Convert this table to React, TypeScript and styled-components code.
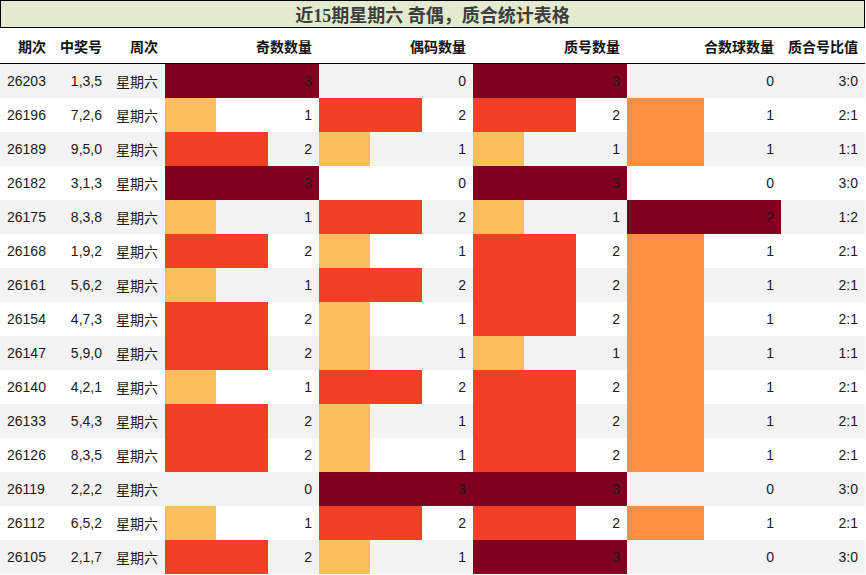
import React from "react";
import styled, { createGlobalStyle } from "styled-components";

const Global = createGlobalStyle`
  html, body { margin: 0; padding: 0; background: #fff; }
  body { font-family: "Liberation Sans", Arial, "Noto Sans CJK SC", sans-serif; }
`;

const Page = styled.div`
  width: 865px;
`;

const Title = styled.div`
  box-sizing: border-box;
  height: 28px;
  border: 1px solid #000;
  background: #e2ebcf;
  display: flex;
  align-items: center;
  justify-content: center;
  font-family: "Liberation Serif", "Noto Sans CJK SC", serif;
  font-weight: bold;
  font-size: 18px;
  color: #3d3d3d;
`;

const COLS = "53px 56px 56px 154px 154px 154px 154px 84px";

const HeaderRow = styled.div`
  display: grid;
  grid-template-columns: ${COLS};
  height: 35px;
  border-bottom: 1px solid #000;
`;

const HeadCell = styled.div`
  display: flex;
  align-items: center;
  justify-content: flex-end;
  padding-right: 7px;
  font-weight: bold;
  font-size: 14px;
  color: #111;
  font-family: "Liberation Sans", "Noto Sans CJK SC", sans-serif;
`;

const Row = styled.div<{ $alt: boolean }>`
  display: grid;
  grid-template-columns: ${COLS};
  height: 34px;
  background: ${(p) => (p.$alt ? "#f3f3f3" : "#ffffff")};
`;

const Cell = styled.div`
  position: relative;
  display: flex;
  align-items: center;
  justify-content: flex-end;
  padding-right: 7px;
  font-size: 14px;
  color: #1a1a1a;
  font-family: "Liberation Sans", "Noto Sans CJK SC", sans-serif;
`;

const FirstCell = styled(Cell)`
  justify-content: flex-start;
  padding-left: 7px;
  padding-right: 0;
`;

const Bar = styled.div<{ $color: string }>`
  position: absolute;
  left: 0;
  top: 0;
  bottom: 0;
  background: ${(p) => p.$color};
`;

const Value = styled.span`
  position: relative;
`;

type R = [string, string, number, number, number, number, string];

const rows: R[] = [
  ["26203", "1,3,5", 3, 0, 3, 0, "3:0"],
  ["26196", "7,2,6", 1, 2, 2, 1, "2:1"],
  ["26189", "9,5,0", 2, 1, 1, 1, "1:1"],
  ["26182", "3,1,3", 3, 0, 3, 0, "3:0"],
  ["26175", "8,3,8", 1, 2, 1, 2, "1:2"],
  ["26168", "1,9,2", 2, 1, 2, 1, "2:1"],
  ["26161", "5,6,2", 1, 2, 2, 1, "2:1"],
  ["26154", "4,7,3", 2, 1, 2, 1, "2:1"],
  ["26147", "5,9,0", 2, 1, 1, 1, "1:1"],
  ["26140", "4,2,1", 1, 2, 2, 1, "2:1"],
  ["26133", "5,4,3", 2, 1, 2, 1, "2:1"],
  ["26126", "8,3,5", 2, 1, 2, 1, "2:1"],
  ["26119", "2,2,2", 0, 3, 3, 0, "3:0"],
  ["26112", "6,5,2", 1, 2, 2, 1, "2:1"],
  ["26105", "2,1,7", 2, 1, 3, 0, "3:0"],
];

const maxes = [3, 3, 3, 2];

function colorFor(ratio: number): string {
  if (ratio >= 0.99) return "#800020";
  if (ratio >= 0.6) return "#f43f28";
  if (ratio >= 0.45) return "#fd8f3f";
  return "#fdbf5c";
}

function BarCell({ value, max }: { value: number; max: number }) {
  const ratio = value / max;
  return (
    <Cell>
      {value > 0 && (
        <Bar $color={colorFor(ratio)} style={{ width: `${ratio * 100}%` }} />
      )}
      <Value>{value}</Value>
    </Cell>
  );
}

const headers = ["期次", "中奖号", "周次", "奇数数量", "偶码数量", "质号数量", "合数球数量", "质合号比值"];

export default function App() {
  return (
    <Page>
      <Global />
      <Title>近15期星期六 奇偶，质合统计表格</Title>
      <HeaderRow>
        {headers.map((h) => (
          <HeadCell key={h}>{h}</HeadCell>
        ))}
      </HeaderRow>
      {rows.map((r, i) => (
        <Row key={r[0]} $alt={i % 2 === 0}>
          <FirstCell>{r[0]}</FirstCell>
          <Cell>{r[1]}</Cell>
          <Cell>星期六</Cell>
          <BarCell value={r[2]} max={maxes[0]} />
          <BarCell value={r[3]} max={maxes[1]} />
          <BarCell value={r[4]} max={maxes[2]} />
          <BarCell value={r[5]} max={maxes[3]} />
          <Cell>{r[6]}</Cell>
        </Row>
      ))}
    </Page>
  );
}
